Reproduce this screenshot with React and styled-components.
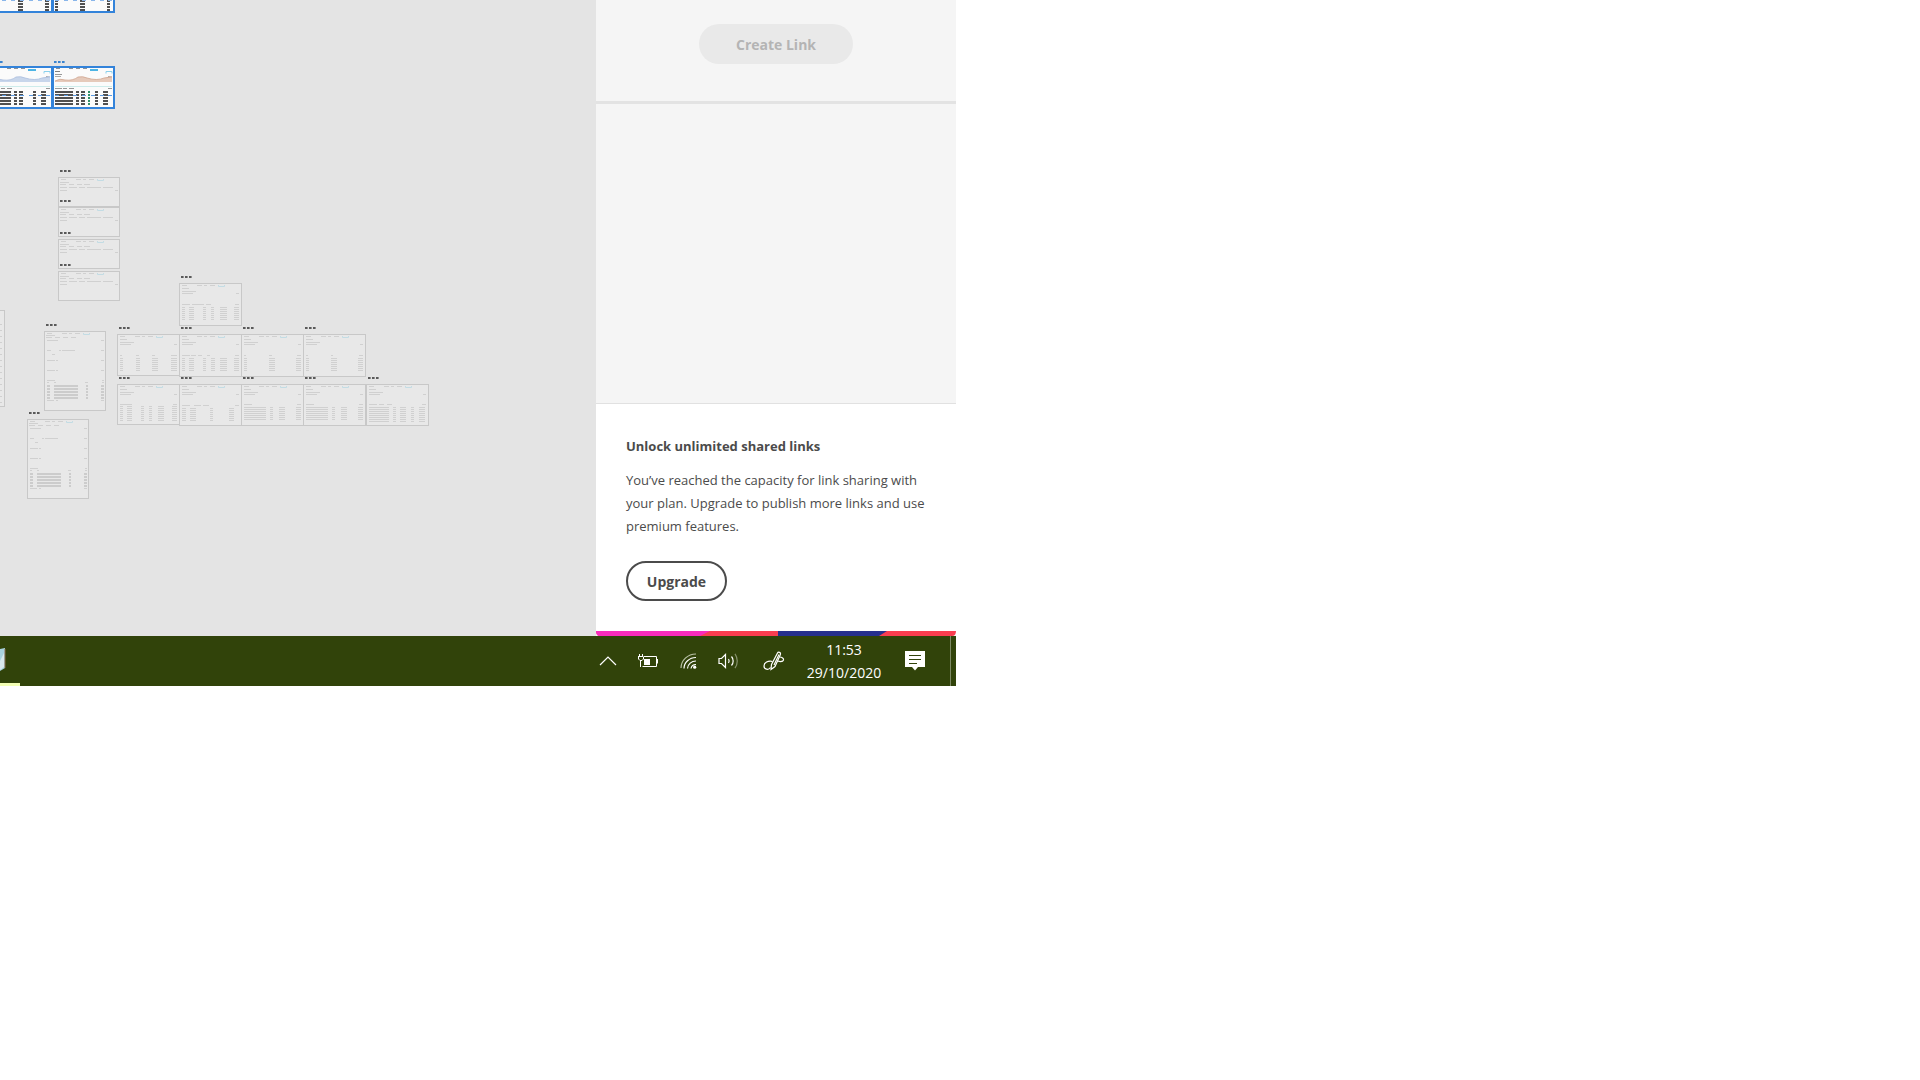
import React from "react";
import styled, { createGlobalStyle } from "styled-components";

// [x, width] pairs, all inside one artboard
const NAV = [[3, 5], [18, 5], [25, 3], [31, 5]];

const wideBoards = [
  {
    id: "single", left: 179, top: 283, height: 43, captionY: 21, rowsY: 24, rows: 7,
    caption: [[3, 8], [13, 12], [27, 5], [56, 4]],
    columns: [[3, 3], [10, 5], [24, 3], [32, 3], [41, 7], [55, 5]],
  },
  {
    id: "a1", left: 117, top: 334, height: 42, captionY: 21, rowsY: 24, rows: 7,
    caption: [[3, 2], [19, 3], [35, 3], [54, 6]],
    columns: [[3, 3], [19, 4], [35, 6], [54, 6]],
  },
  {
    id: "a2", left: 179, top: 334, height: 43, captionY: 21, rowsY: 24, rows: 7,
    caption: [[3, 8], [12, 5], [19, 4], [28, 3], [56, 4]],
    columns: [[3, 3], [10, 5], [24, 3], [32, 4], [41, 7], [55, 5]],
  },
  {
    id: "a3", left: 241, top: 334, height: 43, captionY: 21, rowsY: 24, rows: 7,
    caption: [[3, 2], [28, 3], [56, 4]],
    columns: [[3, 3], [28, 6], [55, 5]],
  },
  {
    id: "a4", left: 303, top: 334, height: 43, captionY: 21, rowsY: 24, rows: 7,
    caption: [[3, 2], [28, 2], [56, 4]],
    columns: [[3, 3], [28, 6], [55, 5]],
  },
  {
    id: "b1", left: 117, top: 384, height: 41, captionY: 20, rowsY: 22, rows: 8,
    caption: [[3, 12], [56, 4]],
    columns: [[3, 3], [10, 5], [24, 3], [32, 3], [41, 6], [55, 5]],
  },
  {
    id: "b2", left: 179, top: 384, height: 42, captionY: 21, rowsY: 24, rows: 7,
    caption: [[3, 8], [15, 7], [24, 6], [56, 4]],
    columns: [[3, 4], [11, 6], [31, 3], [50, 5]],
  },
  {
    id: "b3", left: 241, top: 384, height: 42, captionY: 20, rowsY: 23, rows: 7,
    caption: [[3, 8], [56, 4]],
    columns: [[3, 22], [29, 3], [38, 6], [55, 5]],
  },
  {
    id: "b4", left: 303, top: 384, height: 42, captionY: 20, rowsY: 23, rows: 7,
    caption: [[3, 8], [56, 4]],
    columns: [[3, 22], [29, 3], [38, 6], [55, 5]],
  },
  {
    id: "b5", left: 366, top: 384, height: 42, captionY: 20, rowsY: 23, rows: 8,
    caption: [[3, 8], [13, 5], [21, 5], [56, 4]],
    columns: [[3, 20], [27, 3], [34, 6], [45, 3], [53, 6]],
  },
];

const shortBoards = [
  { id: "s1", left: 58, top: 177 },
  { id: "s2", left: 58, top: 207 },
  { id: "s3", left: 58, top: 239 },
  { id: "s4", left: 58, top: 271 },
];

const tallBoards = [
  { id: "t1", left: 44, top: 331 },
  { id: "t2", left: 27, top: 419 },
];

const Dashes = ({ items, y, h = 1, color = "#d0d0d0" }) =>
  items.map(([x, w]) => (
    <rect key={x} x={x} y={y} width={w} height={h} fill={color} />
  ));

const Rows = ({ items, y, count, step, h, color }) =>
  Array.from({ length: count }, (_, i) => (
    <Dashes key={i} items={items} y={y + i * step} h={h} color={color} />
  ));

const NavMarks = () => (
  <>
    <Dashes items={NAV} y={2} />
    <path d="M39.500 2v1.500h6V2" fill="none" stroke="#c3dce4" />
  </>
);

const WideDrawing = ({ board }) => (
  <svg width="63" height={board.height} aria-hidden="true">
    <NavMarks />
    <Dashes items={[[3, 7]]} y={5} />
    <Dashes items={[[3, 14]]} y={8} />
    <Dashes items={[[3, 11], [57, 3]]} y={10} />
    <Dashes items={board.caption} y={board.captionY} />
    <Rows items={board.columns} y={board.rowsY} count={board.rows} step={2} />
  </svg>
);

const ShortDrawing = () => (
  <svg width="62" height="30" aria-hidden="true">
    <NavMarks />
    <Dashes items={[[2, 9]]} y={5} />
    <Dashes items={[[2, 6], [11, 5], [19, 5], [26, 6]]} y={7} />
    <Dashes items={[[2, 7], [11, 8], [21, 6], [29, 14], [45, 10]]} y={10} />
    <Dashes items={[[2, 7], [57, 3]]} y={13} />
  </svg>
);

const TallDrawing = () => (
  <svg width="62" height="80" aria-hidden="true">
    <NavMarks />
    <Dashes items={[[2, 9]]} y={4} />
    <Dashes items={[[2, 6], [11, 5], [19, 5], [27, 5]]} y={6} />
    <Dashes items={[[3, 11], [57, 3]]} y={9} />
    <Dashes items={[[3, 4], [15, 2], [18, 13], [57, 3]]} y={19} />
    <Dashes items={[[8, 3]]} y={23} />
    <Dashes items={[[3, 8], [12, 2], [57, 3]]} y={29} />
    <Dashes items={[[3, 8], [12, 2], [57, 3]]} y={39} />
    <Dashes items={[[3, 8], [58, 2]]} y={49} />
    <Dashes items={[[3, 2], [10, 2], [41, 3], [58, 2]]} y={51} />
    <Rows
      items={[[3, 3], [10, 24], [42, 2], [57, 3]]}
      y={54}
      count={5}
      step={3}
      h={2}
      color="#cccccc"
    />
    <Dashes items={[[3, 7], [12, 2], [57, 3]]} y={69} />
  </svg>
);

const ReportDrawing = ({ line, fill, green }) => (
  <svg width="63" height="43" aria-hidden="true">
    <Dashes items={[[4, 4], [17, 4], [24, 4], [31, 4]]} y={2} color="#8a9098" />
    <rect x="38" y="3" width="8" height="2" fill="#4cb4e4" />
    <Dashes items={[[3, 5]]} y={5} color="#808080" />
    <path d="M54 7.500v-2h6v2" fill="none" stroke="#8ad0ec" />
    <Dashes items={[[3, 7]]} y={8} color="#999" />
    <Dashes items={[[3, 6], [56, 4]]} y={10} color="#aaa" />
    <path
      d="M3 15q5-3 10-1 8 1 13-3 5-1 9 1 10 3 17 0l8-2v6H3z"
      fill={fill}
    />
    <path
      d="M3 15q5-3 10-1 8 1 13-3 5-1 9 1 10 3 17 0l8-1"
      fill="none"
      stroke={line}
      strokeWidth="0.800"
    />
    <rect x="3" y="20" width="57" height="1" fill="#cdeceb" />
    <Dashes items={[[3, 7], [11, 4], [17, 5], [56, 4]]} y={22} color="#999" />
    <Rows
      items={[[3, 18], [24, 3], [29, 4], [43, 3], [51, 5]]}
      y={25}
      count={5}
      step={3}
      h={2}
      color="#505050"
    />
    <Rows items={[[36, 2]]} y={25} count={5} step={3} h={2} color={green} />
    <Dashes items={[[3, 4], [12, 4], [21, 4], [30, 4], [39, 4], [48, 4], [56, 4]]} y={29} color="#5c9be2" />
  </svg>
);

const ListDrawing = ({ columns }) => (
  <svg width="63" height="43" aria-hidden="true">
    <Rows items={columns} y={30} count={4} step={3} h={2} color="#505050" />
    <Dashes items={[[3, 4], [12, 4], [21, 4], [30, 4], [39, 4], [48, 4], [56, 4]]} y={30} color="#8ab6ea" />
  </svg>
);

const BoardLabel = ({ selected }) => (
  <LabelDots viewBox="0 0 11 2" $selected={selected} aria-hidden="true">
    {[0, 4, 8].map((x) => (
      <rect key={x} x={x} width="2.600" height="2" fill={selected ? "#3a84d0" : "#5a5a5a"} />
    ))}
  </LabelDots>
);

const TrayIcons = {
  chevron: (
    <svg width="18" height="10" viewBox="0 0 18 10" fill="none" stroke="#fff" strokeWidth="1.200">
      <path d="M1 9l8-8 8 8" />
    </svg>
  ),
  battery: (
    <svg width="20" height="14" viewBox="0 0 20 14" fill="none" stroke="#fff">
      <path d="M6 2.500h12.500v10h-14M19.500 5v4.500" />
      <path d="M6 5h6v6H6z" fill="#fff" stroke="none" />
      <path d="M1.500 0v3M4.500 0v3M0 2.500h5.500M.5 3v2L2 6.500h2L5.500 5V3M2.500 6.500v6.500" />
    </svg>
  ),
  wifi: (
    <svg width="18" height="18" viewBox="0 0 18 18" fill="none" stroke="#fff" strokeWidth="1.200">
      <path d="M1 16A15 14 0 0 1 16 2" stroke="#b8c1a6" />
      <path d="M4 16.500A12 11 0 0 1 16 5.500" />
      <path d="M7.500 16.500A8.500 8 0 0 1 16 9" />
      <path d="M11 16.500a5 5 0 0 1 5-4" />
      <circle cx="14.700" cy="15.200" r="1.600" fill="#fff" stroke="none" />
    </svg>
  ),
  volume: (
    <svg width="20" height="16" viewBox="0 0 20 16" fill="none" stroke="#fff" strokeWidth="1.200">
      <path d="M1 5.500h2.500L7.500 1.500v13l-4-4H1z" />
      <path d="M10.500 6c.8 1.200.8 2.800 0 4M13.500 3.500c2.200 2.500 2.200 6.500 0 9" />
      <path d="M17 .8c3 4.200 3 10.200 0 14.400" stroke="#85916c" />
    </svg>
  ),
  pen: (
    <svg width="22" height="20" viewBox="0 0 22 20" fill="none" stroke="#fff" strokeWidth="1.200">
      <path d="M8 18.500l.5-5L14.500 2c.8-1.600 3.600-.6 3 1.300L12 15.500z" />
      <path d="M9.500 10.500C5 9.500 1 11.500 1 15c0 3.500 4.500 4.500 6.500 1.500" />
      <path d="M11 14l5-10.500M16.500 6c2.500 0 4.500 1.500 4 3s-3 2-6 1" />
    </svg>
  ),
  message: (
    <svg width="20" height="20" viewBox="0 0 20 20">
      <path d="M0 0h20v16h-7l-3 3.500L7 16H0z" fill="#fff" />
      <path d="M4 4.500h12M4 8.500h12M4 12.500h8" stroke="#31430a" />
    </svg>
  ),
};

const App = () => {
  return (
    <>
      <GlobalStyle />
      <Desktop>
        <Workspace>
          <Canvas aria-label="Artboards">
            <Artboard $left={-10} $top={-30} $height={43} $selected>
              <ListDrawing columns={[[28, 5], [55, 4]]} />
            </Artboard>
            <Artboard $left={52} $top={-30} $height={43} $selected>
              <ListDrawing columns={[[3, 3], [28, 5], [55, 3]]} />
            </Artboard>
            <Artboard $left={-10} $top={66} $height={43} $selected>
              <BoardLabel selected />
              <ReportDrawing line="#a9bddd" fill="#c8d6eb" green="#fbfbfb" />
            </Artboard>
            <Artboard $left={52} $top={66} $height={43} $selected>
              <BoardLabel selected />
              <ReportDrawing line="#cfa48f" fill="#e6cabb" green="#2e8f68" />
            </Artboard>

            {shortBoards.map((board) => (
              <Artboard key={board.id} $left={board.left} $top={board.top} $width={62} $height={30}>
                <BoardLabel />
                <ShortDrawing />
              </Artboard>
            ))}

            <Artboard $left={-58} $top={310} $height={97}>
              <svg width="63" height="97" aria-hidden="true">
                <Rows items={[[58, 2]]} y={14} count={14} step={6} />
              </svg>
            </Artboard>

            {tallBoards.map((board) => (
              <Artboard key={board.id} $left={board.left} $top={board.top} $width={62} $height={80}>
                <BoardLabel />
                <TallDrawing />
              </Artboard>
            ))}

            {wideBoards.map((board) => (
              <Artboard key={board.id} $left={board.left} $top={board.top} $height={board.height}>
                <BoardLabel />
                <WideDrawing board={board} />
              </Artboard>
            ))}
          </Canvas>

          <SharePanel>
            <CreateSection>
              <CreateButton type="button" disabled>
                Create Link
              </CreateButton>
            </CreateSection>
            <LinkList />
            <Promo>
              <h2>Unlock unlimited shared links</h2>
              <p>
                You’ve reached the capacity for link sharing with your plan.
                Upgrade to publish more links and use premium features.
              </p>
              <UpgradeButton type="button">Upgrade</UpgradeButton>
            </Promo>
            <Stripe viewBox="0 0 360 5" preserveAspectRatio="none" aria-hidden="true">
              <path d="M0 0h360q0 5-4 5H4Q0 5 0 0z" fill="#fa3d50" />
              <path d="M0 0h114l-10 5H4Q0 5 0 0z" fill="#f92bbd" />
              <path d="M182 0h109l-8 5H182z" fill="#262f8e" />
            </Stripe>
          </SharePanel>
        </Workspace>

        <Taskbar>
          <RunningApp type="button" aria-label="Open app">
            <svg width="6" height="26" viewBox="0 0 6 26" aria-hidden="true">
              <path d="M0 2l5-1v20l-5 3z" fill="#a9d3df" />
              <path d="M0 14l4-8v14l-4 3z" fill="#d8e9ee" />
              <path d="M5 2v19" stroke="#8c6a4c" />
            </svg>
          </RunningApp>
          <Tray>
            <TrayButton type="button" $width={32} aria-label="Show hidden icons">
              {TrayIcons.chevron}
            </TrayButton>
            <TrayButton type="button" $width={48} aria-label="Battery">
              {TrayIcons.battery}
            </TrayButton>
            <TrayButton type="button" $width={34} aria-label="Network">
              {TrayIcons.wifi}
            </TrayButton>
            <TrayButton type="button" $width={44} aria-label="Volume">
              {TrayIcons.volume}
            </TrayButton>
            <TrayButton type="button" $width={48} aria-label="Pen workspace">
              {TrayIcons.pen}
            </TrayButton>
            <Clock type="button">
              <span>11:53</span>
              <span>29/10/2020</span>
            </Clock>
            <TrayButton type="button" $width={50} aria-label="Notifications">
              {TrayIcons.message}
            </TrayButton>
            <ShowDesktop type="button" aria-label="Show desktop" />
          </Tray>
        </Taskbar>
      </Desktop>
    </>
  );
};

export default App;

const GlobalStyle = createGlobalStyle`
  * {
    box-sizing: border-box;
  }

  body {
    margin: 0;
    background: #ffffff;
    font-family: "Open Sans", "Noto Sans", sans-serif;
    color: #4b4b4b;
  }

  button {
    font-family: inherit;
    padding: 0;
    border: none;
    background: none;
  }

  svg {
    display: block;
  }
`;

const Desktop = styled.div`
  width: calc(50% - 4px);
  min-width: 800px;
`;

const Workspace = styled.div`
  display: flex;
`;

const Canvas = styled.main`
  position: relative;
  flex: 1;
  overflow: hidden;
  background: #e4e4e4;
`;

const Artboard = styled.div`
  position: absolute;
  left: ${(props) => props.$left}px;
  top: ${(props) => props.$top}px;
  width: ${(props) => props.$width || 63}px;
  height: ${(props) => props.$height}px;
  background: ${(props) => (props.$selected ? "#fbfbfb" : "#e8e8e8")};

  &::after {
    content: "";
    position: absolute;
    inset: 0;
    border: ${(props) => (props.$selected ? "2px solid #3383da" : "1px solid #c8c8c8")};
  }
`;

const LabelDots = styled.svg`
  position: absolute;
  left: 2px;
  top: ${(props) => (props.$selected ? "-5px" : "-7px")};
  width: 11px;
  height: 2px;
`;

const SharePanel = styled.aside`
  width: 360px;
  display: flex;
  flex-direction: column;
  background: #f5f5f5;
`;

const CreateSection = styled.section`
  display: flex;
  justify-content: center;
  padding: 24px 0 37px;
  border-bottom: 3px solid #e3e3e3;
`;

const CreateButton = styled.button`
  width: 154px;
  height: 40px;
  border-radius: 20px;
  background: #e9e9e9;
  color: #b4b4b4;
  font-size: 14px;
  font-weight: 700;
`;

const LinkList = styled.section`
  min-height: 299px;
`;

const Promo = styled.section`
  padding: 30px;
  border-top: 1px solid #e1e1e1;
  background: #ffffff;

  h2 {
    margin: 0 0 10px;
    font-size: 13px;
    line-height: 25px;
    font-weight: 700;
  }

  p {
    margin: 0 0 23px;
    font-size: 13px;
    line-height: 23px;
  }
`;

const UpgradeButton = styled.button`
  display: block;
  width: 101px;
  height: 40px;
  && {
    border: 2px solid #4b4b4b;
  }
  border-radius: 20px;
  color: #4b4b4b;
  font-size: 14px;
  font-weight: 700;
`;

const Stripe = styled.svg`
  width: 100%;
  height: 5px;
`;

const Taskbar = styled.footer`
  display: flex;
  justify-content: space-between;
  height: 50px;
  background: #31430a;
`;

const RunningApp = styled.button`
  display: flex;
  align-items: center;
  width: 20px;
  && {
    border-bottom: 3px solid #f3ffb5;
  }
`;

const Tray = styled.div`
  display: flex;
`;

const TrayButton = styled.button`
  display: flex;
  align-items: center;
  justify-content: center;
  width: ${(props) => props.$width}px;
`;

const Clock = styled.button`
  display: flex;
  flex-direction: column;
  align-items: center;
  justify-content: center;
  width: 92px;
  color: #ffffff;
  font-size: 14px;
  line-height: 23px;
`;

const ShowDesktop = styled.button`
  width: 6px;
  margin-left: 10px;
  && {
    border-left: 1px solid #7d8963;
  }
`;
